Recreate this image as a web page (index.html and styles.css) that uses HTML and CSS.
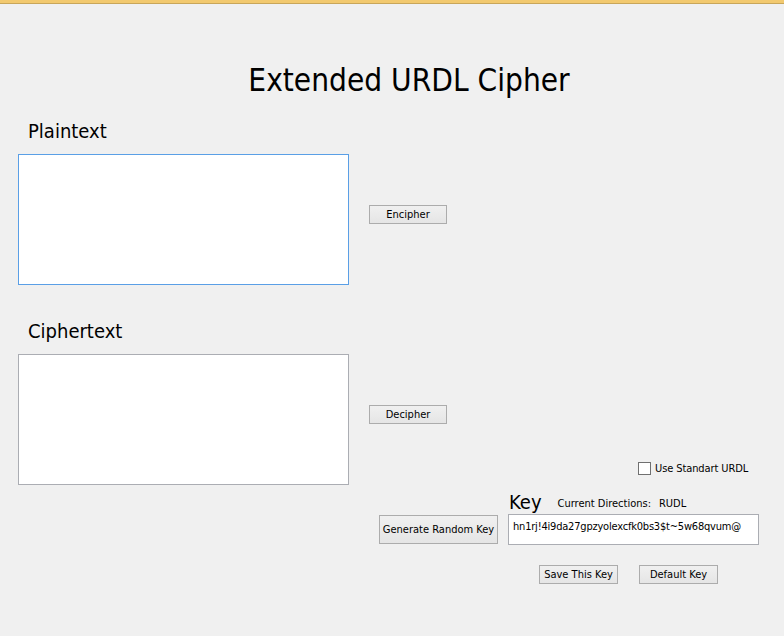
FILE: index.html
```html
<!DOCTYPE html>
<html lang="en">
<head>
<meta charset="utf-8">
<title>Extended URDL Cipher</title>
<link rel="stylesheet" href="styles.css">
</head>
<body>
<div class="topbar"></div>
<main class="window">
  <h1 class="title">Extended URDL Cipher</h1>

  <section class="block block-plain">
    <div class="label">Plaintext</div>
    <div class="row">
      <textarea class="area area-focus"></textarea>
      <div class="side">
        <button class="btn btn-small">Encipher</button>
      </div>
    </div>
  </section>

  <section class="block block-cipher">
    <div class="label">Ciphertext</div>
    <div class="row">
      <textarea class="area"></textarea>
      <div class="side">
        <button class="btn btn-small">Decipher</button>
        <label class="check-row">
          <span class="checkbox"></span>
          <span class="check-text">Use Standart URDL</span>
        </label>
        <div class="key-head">
          <span class="key-label">Key</span>
          <span class="dir-label">Current Directions:</span>
          <span class="dir-value">RUDL</span>
        </div>
        <div class="key-row">
          <button class="btn btn-gen">Generate Random Key</button>
          <div class="key-input">hn1rj!4i9da27gpzyolexcfk0bs3$t~5w68qvum@</div>
        </div>
        <div class="key-actions">
          <button class="btn btn-small btn-save">Save This Key</button>
          <button class="btn btn-small">Default Key</button>
        </div>
      </div>
    </div>
  </section>
</main>
</body>
</html>
```
FILE: styles.css
```css
html, body {
  margin: 0;
  padding: 0;
  background: #f0f0f0;
}
body {
  font-family: "DejaVu Sans Condensed", "DejaVu Sans", sans-serif;
  color: #000;
  width: 784px;
  height: 636px;
  overflow: hidden;
}
.topbar {
  height: 3px;
  background: #f2c96f;
  border-bottom: 1px solid #c8a65a;
}
.window {
  display: flex;
  flex-direction: column;
}
.title {
  margin: 56px 0 0 0;
  font-weight: normal;
  font-size: 31.3px;
  line-height: 40px;
  text-align: center;
  padding-left: 34px;
}
.block {
  display: flex;
  flex-direction: column;
  padding-left: 18px;
}
.block-plain { margin-top: 18px; }
.block-cipher { margin-top: 33px; }
.label {
  font-size: 20px;
  line-height: 26px;
  padding-left: 10px;
  margin-bottom: 10px;
}
.row {
  display: flex;
  align-items: flex-start;
}
.area {
  box-sizing: border-box;
  width: 331px;
  height: 131px;
  margin: 0;
  padding: 2px;
  border: 1px solid #abadb3;
  background: #fff;
  resize: none;
  outline: none;
  font-family: inherit;
}
.area-focus {
  border-color: #5a9fe6;
}
.side {
  display: flex;
  flex-direction: column;
  align-items: flex-start;
  margin-left: 20px;
  padding-top: 51px;
}
.btn {
  box-sizing: border-box;
  margin: 0;
  padding: 0;
  border: 1px solid #acacac;
  background: linear-gradient(#f0f0f0, #e5e5e5);
  font-family: "DejaVu Sans Condensed", "DejaVu Sans", sans-serif;
  font-size: 11px;
  color: #000;
  line-height: 17px;
  text-align: center;
}
.btn-small {
  width: 78px;
  height: 19px;
}
.check-row {
  display: flex;
  align-items: center;
  margin-top: 38px;
  margin-left: 269px;
  height: 13px;
}
.checkbox {
  box-sizing: border-box;
  width: 13px;
  height: 13px;
  border: 1px solid #707070;
  background: #fff;
}
.check-text {
  margin-left: 4px;
  font-size: 11px;
  line-height: 13px;
  letter-spacing: -0.1px;
}
.key-head {
  display: flex;
  align-items: baseline;
  margin-top: 15px;
  margin-left: 140px;
  height: 24px;
}
.key-label {
  font-size: 20px;
  line-height: 24px;
}
.dir-label {
  margin-left: 16px;
  font-size: 11px;
  position: relative;
  top: -2px;
}
.dir-value {
  margin-left: 8px;
  font-size: 11px;
  position: relative;
  top: -2px;
}
.key-row {
  display: flex;
  align-items: flex-start;
}
.btn-gen {
  width: 119px;
  height: 29px;
  margin-top: 1px;
  margin-left: 10px;
}
.key-input {
  box-sizing: border-box;
  width: 251px;
  height: 31px;
  margin-left: 10px;
  border: 1px solid #abadb3;
  background: #fff;
  padding: 4px 0 0 4px;
  font-size: 11px;
  letter-spacing: -0.2px;
  line-height: 16px;
  white-space: nowrap;
  overflow: hidden;
}
.key-actions {
  display: flex;
  gap: 21px;
  margin-top: 20px;
  margin-left: 170px;
}
.key-actions .btn {
  width: 79px;
}
```
